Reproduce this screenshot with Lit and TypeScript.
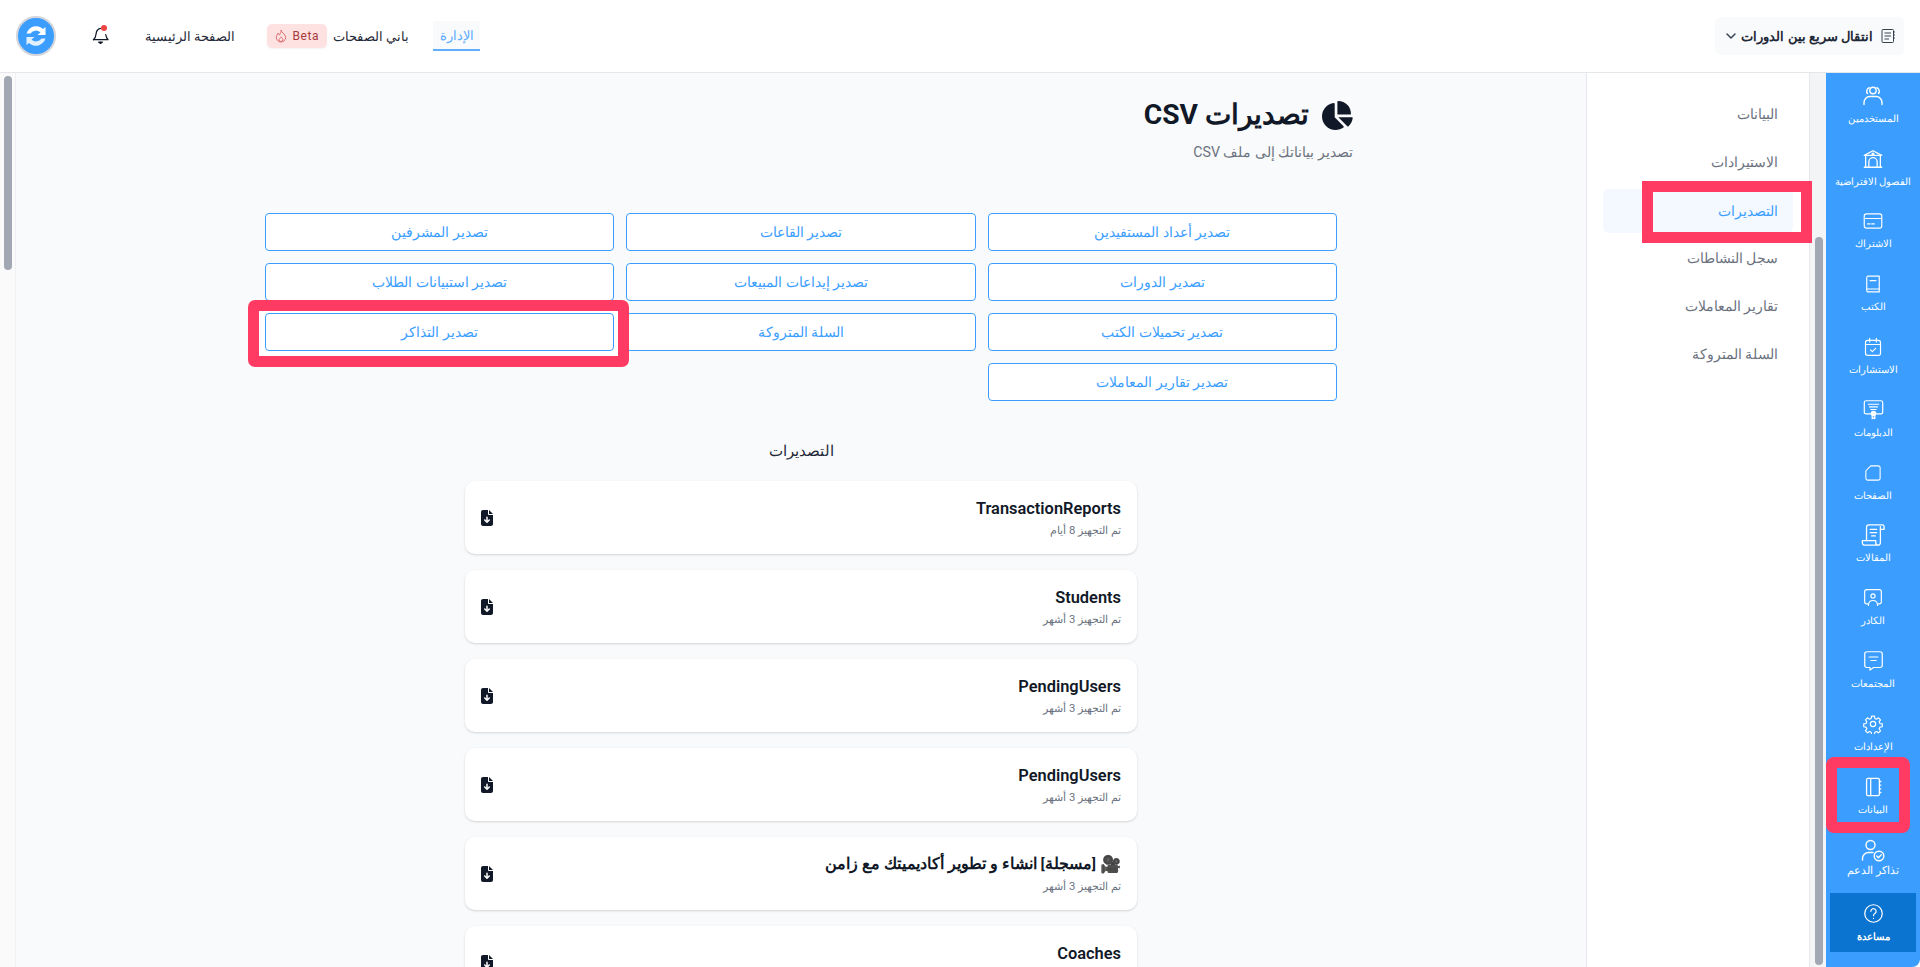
import { LitElement, html, css, svg } from "lit";
import { customElement } from "lit/decorators.js";

const ic = (s: number, vb: string, body: unknown) => html`<svg width=${s} height=${s} viewBox=${vb} fill="none" stroke="currentColor" stroke-width="1.4" stroke-linecap="round" stroke-linejoin="round">${body}</svg>`;

const railItems: { label: string; icon: unknown; cls?: string }[] = [
  { label: "المستخدمين", icon: ic(24, "0 0 24 24", svg`<circle cx="12" cy="6.5" r="3.2"/><path d="M3 20.500v-2C3 15 6 12.500 8.500 12.500h7C18 12.500 21 15 21 18.500v2"/><path d="M6.500 9.500C5.200 8.200 5.500 5 8 3.600M17.500 9.500c1.300-1.300 1-4.500-1.500-5.900"/>`) },
  { label: "الفصول الافتراضية", icon: ic(22, "0 0 24 24", svg`<path d="M2.500 8 12 3l9.500 5"/><path d="M4 8h16M4 8v13M20 8v13M2.500 21h19"/><path d="M7.500 21v-6a4.500 4.500 0 0 1 9 0v6"/><circle cx="12" cy="6.600" r="1"/>`) },
  { label: "الاشتراك", icon: ic(20, "0 0 24 24", svg`<rect x="1.500" y="3.500" width="21" height="17" rx="2.500"/><path d="M1.500 9h21M5.500 15.500h3M10.500 15.500h3"/>`) },
  { label: "الكتب", icon: ic(20, "0 0 24 24", svg`<path d="M4.500 19V4.500a2 2 0 0 1 2-2h13v19h-13a2 2 0 0 1-2-2.500z"/><path d="M4.500 18h15M8.500 8h7"/>`) },
  { label: "الاستشارات", icon: ic(20, "0 0 24 24", svg`<rect x="3" y="4" width="18" height="18" rx="2.500"/><path d="M3 9h18M8 1.500V6M16 1.500V6M9 15.500l2.200 2 4-3.800"/>`) },
  { label: "الدبلومات", icon: ic(21, "0 0 24 24", svg`<rect x="1.500" y="2" width="21" height="15" rx="2"/><path d="M6 6h12M7.500 9h9M9 12h6"/><circle cx="12" cy="16.500" r="2.500" fill="currentColor"/><path d="M10.500 19v3.500l1.500-1 1.500 1V19"/>`) },
  { label: "الصفحات", icon: ic(18, "0 0 24 24", svg`<path d="M9 2.500h10a2.500 2.500 0 0 1 2.500 2.500v14a2.500 2.500 0 0 1-2.500 2.500H5A2.500 2.500 0 0 1 2.500 19V9z"/>`) },
  { label: "المقالات", icon: ic(24, "0 0 26 26", svg`<path d="M6 19V4.500A2.500 2.500 0 0 1 8.500 2H23a2 2 0 0 1 2 2v3h-4"/><path d="M21 4v17.500a2.500 2.500 0 0 1-2.500 2.500H4a2.500 2.500 0 0 1-2.500-2.500V19H16v2.500A2.500 2.500 0 0 0 18.500 24"/><path d="M10 7h7M10 10.500h7M11.500 14h4"/>`) },
  { label: "الكادر", icon: ic(20, "0 0 24 24", svg`<path d="M6 19H4.500A2.500 2.500 0 0 1 2 16.500v-12A2.500 2.500 0 0 1 4.500 2h15A2.500 2.500 0 0 1 22 4.500v12a2.500 2.500 0 0 1-2.500 2.500H18"/><circle cx="12" cy="9.500" r="2.500"/><path d="M6.500 21c0-4 2.500-6 5.500-6s5.500 2 5.500 6"/>`) },
  { label: "المجتمعات", icon: ic(21, "0 0 24 24", svg`<path d="M4.500 2h15A2.500 2.500 0 0 1 22 4.500v13a2.500 2.500 0 0 1-2.500 2.500H12l-4 3v-3H4.500A2.500 2.500 0 0 1 2 17.500v-13A2.500 2.500 0 0 1 4.500 2z"/><path d="M7 8h10M9 12h6"/>`) },
  { label: "الإعدادات", icon: ic(20, "0 0 24 24", svg`<circle cx="12" cy="12" r="3.200"/><path d="M10.300 2.500h3.400l.5 2.800 2 .9 2.400-1.600 2.400 2.400-1.600 2.400.9 2 2.800.5v3.400l-2.800.5-.9 2 1.600 2.400-2.400 2.400-2.400-1.600-2 .9-.5 2.800h-3.400l-.5-2.800-2-.9-2.400 1.600-2.400-2.400 1.600-2.400-.9-2-2.800-.5v-3.400l2.800-.5.9-2-1.600-2.400 2.400-2.400 2.400 1.600 2-.9z"/>`) },
  { label: "البيانات", icon: ic(22, "0 0 24 24", svg`<rect x="5" y="2.500" width="14" height="19" rx="1.500"/><path d="M9.500 2.500v19M19 6h1.500M19 10h1.500M19 14h1.500M19 18h1.500"/>`) },
  { label: "تذاكر الدعم", cls: "big", icon: ic(24, "0 0 24 24", svg`<circle cx="9.500" cy="7" r="4.500"/><path d="M1.500 22v-1.500c0-3.500 3-6 6-6H12"/><circle cx="18" cy="18" r="4.800"/><path d="M15.700 18l1.700 1.700 2.900-3"/>`) },
];

const buttons = [
  "تصدير أعداد المستفيدين", "تصدير القاعات", "تصدير المشرفين",
  "تصدير الدورات", "تصدير إيداعات المبيعات", "تصدير استبيانات الطلاب",
  "تصدير تحميلات الكتب", "السلة المتروكة", "تصدير التذاكر",
  "تصدير تقارير المعاملات",
];

const exportsList = [
  { t: "TransactionReports", s: "تم التجهيز 8 أيام" },
  { t: "Students", s: "تم التجهيز 3 أشهر" },
  { t: "PendingUsers", s: "تم التجهيز 3 أشهر" },
  { t: "PendingUsers", s: "تم التجهيز 3 أشهر" },
  { t: "[مسجلة] انشاء و تطوير أكاديميتك مع زامن", s: "تم التجهيز 3 أشهر", ar: true },
  { t: "Coaches", s: "تم التجهيز 3 أشهر" },
];

const subnav = ["البيانات", "الاستيرادات", "التصديرات", "سجل النشاطات", "تقارير المعاملات", "السلة المتروكة"];

@customElement("app-root")
export class AppRoot extends LitElement {
  static styles = css`
    :host { display: block; position: relative; height: 967px; overflow: hidden; direction: rtl; background: #fff;
      font-family: "Roboto", "Noto Sans", sans-serif; color: #111827; }
    svg { flex: none; }
    .top { height: 72px; border-bottom: 1px solid #e5e7eb; display: flex; align-items: center; justify-content: space-between; padding: 0 16px; }
    .switch { display: flex; align-items: center; gap: 8px; height: 38px; width: 189px; box-sizing: border-box; padding: 0 9px 0 10px; background: #f9fafb; border-radius: 6px; font-size: 13px; font-weight: 600; color: #1f2937; white-space: nowrap; }
    .switch .txt { flex: 1; min-width: 0; }
    .nav { display: flex; align-items: center; }
    .tab { height: 30px; display: flex; align-items: center; justify-content: center; width: 47px; box-sizing: border-box; font-size: 13px; color: #5aabff; background: #f8fafc; border-bottom: 2px solid #60aeff; margin-left: 24px; }
    .lnk { font-size: 13px; color: #1f2937; }
    .lnk.b { font-size: 12.5px; }
    .beta { display: flex; align-items: center; gap: 5px; height: 24px; width: 60px; box-sizing: border-box; justify-content: center; margin: 0 6px 0 32px; background: #fee2e2; color: #a83a3a; border-radius: 5px; font-size: 12px; font-weight: 400; direction: ltr; flex-direction: row-reverse; letter-spacing: .6px; box-shadow: 0 1px 2px rgba(0,0,0,.05); }
    .home { margin-left: 35px; }
    .bell { position: relative; color: #111827; width: 18px; height: 18px; margin: -3px 0 0 36px; display: flex; }
    .bell i { position: absolute; top: -1px; left: 9px; width: 6px; height: 6px; border-radius: 50%; background: #ef4444; }
    .logo { width: 40px; height: 40px; border-radius: 50%; display: flex; }
    .body { display: flex; height: 894px; }
    .rail { width: 94px; flex: none; background: #3b9eff; color: #fff; border-bottom-right-radius: 8px; display: flex; flex-direction: column; align-items: center; }
    .ri { height: 62.8px; flex: none; width: 100%; display: flex; flex-direction: column; align-items: center; justify-content: flex-end; gap: 4px; padding-bottom: 10px; box-sizing: border-box; font-size: 9.5px; line-height: 14px; white-space: nowrap; }
    .ri.big { font-size: 10.5px; gap: 2px; padding-bottom: 11px; }
    .ib { height: 24px; display: flex; align-items: center; justify-content: center; }
    .help { margin-top: 4px; width: 86px; height: 59px; flex: none; background: #0b74d0; display: flex; flex-direction: column; align-items: center; justify-content: center; gap: 4px; font-size: 9.5px; font-weight: 600; line-height: 14px; }
    .gut { width: 16px; flex: none; background: #f3f4f6; }
    .sub { width: 224px; flex: none; box-sizing: border-box; border-inline-start: 1px solid #e5e7eb; border-inline-end: 1px solid #e5e7eb; padding: 20px 16px 0; background: #fff; display: flex; flex-direction: column; gap: 4px; }
    .si { height: 44px; box-sizing: border-box; display: flex; align-items: center; font-size: 14px; font-weight: 500; color: #6b7280; padding: 0 15px 2px; border-radius: 6px; }
    .si.on { background: #f4f9ff; color: #3b9eff; padding-bottom: 0; }
    .main { flex: 1; min-width: 0; background: #f9fafb; display: flex; isolation: isolate; overflow: hidden; }
    .pane { flex: 1; min-width: 0; }
    .lgut { width: 15px; flex: none; background: #fafafb; border-right: 1px solid #f0f0f3; }
    .wrap { width: 1104px; margin: 0 auto; padding-top: 22px; }
    h1 { margin: 0; height: 40px; display: flex; align-items: center; gap: 11px; font-size: 28.2px; font-weight: 700; color: #111827; line-height: 40px; }
    .subt { margin-top: 5px; font-size: 14.2px; line-height: 24px; color: #6b7280; }
    .grid { display: grid; grid-template-columns: repeat(3, 1fr); gap: 12px; margin: 49px 16px 0; }
    .btn { position: relative; height: 38px; box-sizing: border-box; background: #fff; border: 1px solid #3b9eff; color: #3b9eff; border-radius: 4px; font-size: 14px; font-weight: 500; display: flex; align-items: center; justify-content: center; }
    .btn.hl::before { content: ""; position: absolute; inset: -3px -5px -6px -7px; background: #fff; z-index: -1; }
    .btn.hl::after { content: ""; position: absolute; inset: -14px -16px -17px -18px; border: 11px solid #ff3b63; border-radius: 7px; z-index: 2; pointer-events: none; }
    .sect { margin-top: 35px; height: 30px; line-height: 30px; text-align: center; font-size: 15px; color: #1f2937; }
    .list { width: 672px; margin: 15px auto 0; display: flex; flex-direction: column; gap: 16px; }
    .card { height: 73px; flex: none; box-sizing: border-box; background: #fff; border-radius: 10px; box-shadow: 0 1px 3px rgba(0,0,0,.1), 0 1px 2px rgba(0,0,0,.06); padding: 15px 16px; display: flex; justify-content: space-between; align-items: center; }
    .ct { font-size: 16.4px; font-weight: 600; line-height: 25px; color: #111827; white-space: nowrap; }
    .ct.ar { font-size: 15.5px; display: flex; align-items: center; gap: 4px; }
    .emo { font-size: 17px; }
    .cs { font-size: 11.3px; line-height: 18px; margin-top: 1px; color: #6b7280; }
    .dl { display: flex; color: #111827; }
    .mark { position: absolute; box-sizing: border-box; border: 11px solid #ff3b63; pointer-events: none; }
    .m1 { left: 1642px; top: 181px; width: 170px; height: 62px; }
    .m2 { left: 1826px; top: 757px; width: 84px; height: 76px; border-radius: 8px; }
    .bar { position: absolute; background: #a1a8b3; border-radius: 4px; }
    .b1 { left: 4px; top: 76px; width: 8px; height: 194px; }
    .b2 { left: 1815px; top: 237px; width: 8px; height: 728px; }
  `;

  render() {
    return html`
      <div class="top">
        <div class="switch">
          <svg width="14" height="14" viewBox="0 0 14 14" fill="none" stroke="#374151" stroke-width="1"><rect x="1" y=".5" width="11.500" height="13" rx="1"/><path d="M3.500 4h6.500M3.500 7h6.500M3.500 10h4.500M12.500 3h1.500M12.500 6h1.500M12.500 9h1.500"/></svg>
          <span class="txt">انتقال سريع بين الدورات</span>
          <svg width="12" height="12" viewBox="0 0 12 12" fill="none" stroke="#374151" stroke-width="1.500" stroke-linecap="round" stroke-linejoin="round"><path d="M2 4l4 4 4-4"/></svg>
        </div>
        <div class="nav">
          <span class="tab">الإدارة</span>
          <span class="lnk b">باني الصفحات</span>
          <span class="beta">
            <span>Beta</span>
            <svg width="12" height="14" viewBox="0 0 14 16" fill="none" stroke="#dc6a6a" stroke-width="1.100" stroke-linejoin="round"><path d="M7 1c.5 3 4.800 4.500 5.500 8.500A5.500 5.500 0 0 1 7 15a5.500 5.500 0 0 1-5.500-5.500C1.500 7.500 3 6 3.500 4.500 5 5.500 5 7 5 7 6.500 5 7.500 3 7 1z"/><path d="M7 9c.5 1 2.300 2 2.300 3.300A2.300 2.300 0 0 1 7 14.500a2.300 2.300 0 0 1-2.300-2.200C4.700 11 6.500 10.500 7 9z"/></svg>
          </span>
          <span class="lnk home">الصفحة الرئيسية</span>
          <span class="bell">
            <svg width="18" height="18" viewBox="0 0 18 19" fill="none" stroke="currentColor" stroke-width="1.300" stroke-linecap="round" stroke-linejoin="round"><path d="M1 14.500c2-1.500 2.500-3 2.800-6C4 5.500 6 3 8.500 2.500"/><path d="M14 9c.3 2.500.8 4 2.500 5.500H1"/><path d="M6.500 17h4L8.500 18.500z" fill="currentColor"/></svg>
            <i></i>
          </span>
          <span class="logo">
            <svg width="40" height="40" viewBox="0 0 40 40"><circle cx="20" cy="20" r="19" fill="#3b9eff" stroke="#d1d5db" stroke-width="2"/><path d="M10.500 17.500A10 10 0 0 1 27 13l2.500-2v8h-8l3-2.500a6.500 6.500 0 0 0-10 1z" fill="#fff"/><path d="M29.500 22.500A10 10 0 0 1 13 27l-2.500 2v-8h8l-3 2.500a6.500 6.500 0 0 0 10-1z" fill="#e0f0ff"/></svg>
          </span>
        </div>
      </div>
      <div class="body">
        <div class="rail">
          ${railItems.map((r) => html`<div class="ri ${r.cls ?? ""}"><span class="ib">${r.icon}</span><span>${r.label}</span></div>`)}
          <div class="help">
            <span class="ib">${ic(21, "0 0 24 24", svg`<circle cx="12" cy="12" r="10"/><path d="M9 9.500a3 3 0 1 1 4.500 2.600c-1 .6-1.500 1.200-1.500 2.400M12 17.500v.2"/>`)}</span>
            <span>مساعدة</span>
          </div>
        </div>
        <div class="gut"></div>
        <div class="sub">
          ${subnav.map((s, i) => html`<div class="si ${i === 2 ? "on" : ""}">${s}</div>`)}
        </div>
        <div class="main">
          <div class="pane">
            <div class="wrap">
              <h1>
                <svg width="33" height="29" viewBox="0 0 576 512" fill="#111827"><path d="M304 240V16.600c0-9 7-16.600 16-16.600C443.700 0 544 100.300 544 224c0 9-7.600 16-16.600 16H304zM32 272C32 150.700 122.100 50.300 239 34.300c9.200-1.300 17 6.100 17 15.400V288L412.500 444.500c6.700 6.700 6.200 17.700-1.500 23.100C371.800 495.600 323.800 512 272 512C139.500 512 32 404.600 32 272zm526.400 16c9.300 0 16.600 7.800 15.400 17c-7.700 55.900-34.600 105.600-73.900 142.300c-6 5.600-15.400 5.200-21.200-.7L320 288H558.400z"/></svg>
                <span>تصديرات CSV</span>
              </h1>
              <div class="subt">تصدير بياناتك إلى ملف CSV</div>
              <div class="grid">
                ${buttons.map((b, i) => html`<div class="btn ${i === 8 ? "hl" : ""}">${b}</div>`)}
              </div>
              <div class="sect">التصديرات</div>
              <div class="list">
                ${exportsList.map((c) => html`
                  <div class="card">
                    <div>
                      <div class="ct ${c.ar ? "ar" : ""}">${c.ar ? html`<span class="emo">🎥</span>` : ""}<span>${c.t}</span></div>
                      <div class="cs">${c.s}</div>
                    </div>
                    <span class="dl"><svg width="12" height="16" viewBox="0 0 384 512" fill="currentColor"><path d="M64 0C28.700 0 0 28.700 0 64V448c0 35.300 28.700 64 64 64H320c35.300 0 64-28.700 64-64V160H256c-17.700 0-32-14.300-32-32V0H64zM256 0V128H384L256 0zM216 232V334.100l31-31c9.400-9.400 24.600-9.400 33.900 0s9.400 24.600 0 33.900l-72 72c-9.400 9.400-24.600 9.400-33.900 0l-72-72c-9.400-9.400-9.400-24.600 0-33.900s24.600-9.400 33.900 0l31 31V232c0-13.300 10.700-24 24-24s24 10.700 24 24z"/></svg></span>
                  </div>`)}
              </div>
            </div>
          </div>
          <div class="lgut"></div>
        </div>
      </div>
      <div class="bar b1"></div>
      <div class="bar b2"></div>
      <div class="mark m1"></div>
      <div class="mark m2"></div>
    `;
  }
}
